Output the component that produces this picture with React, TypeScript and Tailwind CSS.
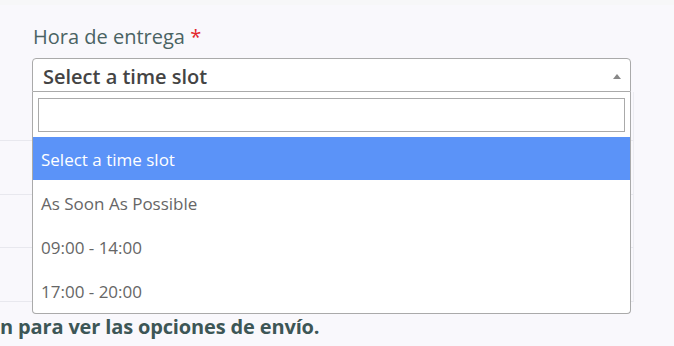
import React from "react";

const options = ["As Soon As Possible", "09:00 - 14:00", "17:00 - 20:00"];

export default function App() {
  return (
    <div
      className="relative w-[674px] h-[346px] overflow-hidden bg-[#f9f8fc]"
      style={{ fontFamily: '"Open Sans", "Liberation Sans", sans-serif' }}
    >
      <div className="h-[5px] bg-[#f7f7f8]" />
      {/* form group */}
      <div className="pl-[32px] pr-[43px] pt-[18px]">
        <label className="block h-[28px] text-[20px] leading-[28px] font-medium text-[#4a6363] pl-px">
          Hora de entrega <span className="text-[#e3262b]">*</span>
        </label>
        <div className="mt-[7px] h-[34px] w-[599px] rounded-t-[4px] border border-[#aaaaaa] bg-white flex items-start justify-between pl-[10px] pr-[9px]">
          <span className="pt-[4px] text-[20px] leading-[28px] font-semibold text-[#444444]">
            Select a time slot
          </span>
          <span className="mt-[15px] w-0 h-0 border-x-[4px] border-x-transparent border-b-[5px] border-b-[#888888]" />
        </div>
      </div>

      {/* background table */}
      <div className="w-[634px] border-r border-[#ececf1]">
        <div className="h-[49px] border-b border-[#e8e8ee]" />
        <div className="h-[54px] border-b border-[#e8e8ee]" />
        <div className="h-[53px] border-b border-[#e8e8ee]" />
        <div className="h-[54px] border-b border-[#e8e8ee]" />
      </div>
      <div className="h-[43px] flex items-center">
        <span className="text-[20px] leading-[28px] font-bold text-[#3d5656] whitespace-nowrap pt-[6px] tracking-[-0.15px]">
          n para ver las opciones de envío.
        </span>
      </div>

      {/* open dropdown */}
      <div className="absolute left-[32px] top-[92px] w-[599px] h-[222px] bg-white border border-t-0 border-[#aaaaaa] rounded-b-[4px] overflow-hidden">
        <div className="px-[5px] pt-[6px] pb-[5px]">
          <div className="h-[34px] border border-[#aaaaaa] bg-white" />
        </div>
        <div className="h-[43px] bg-[#5b93f8] text-white text-[17px] leading-[43px] pl-[8px] pt-px">
          Select a time slot
        </div>
        {options.map((o) => (
          <div key={o} className="h-[44px] text-[17px] leading-[44px] pl-[8px] pt-[2px] text-[#666666]">
            {o}
          </div>
        ))}
      </div>
    </div>
  );
}
